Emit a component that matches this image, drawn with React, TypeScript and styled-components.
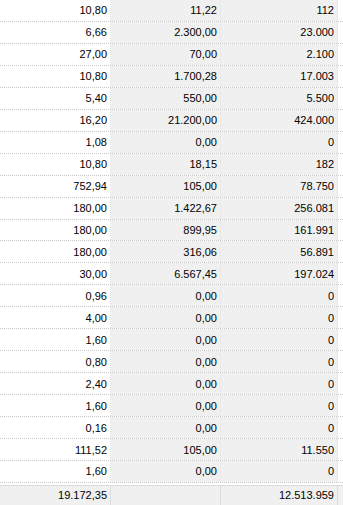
import React from "react";
import styled, { createGlobalStyle } from "styled-components";

const rows: [string, string, string][] = [
  ["10,80", "11,22", "112"],
  ["6,66", "2.300,00", "23.000"],
  ["27,00", "70,00", "2.100"],
  ["10,80", "1.700,28", "17.003"],
  ["5,40", "550,00", "5.500"],
  ["16,20", "21.200,00", "424.000"],
  ["1,08", "0,00", "0"],
  ["10,80", "18,15", "182"],
  ["752,94", "105,00", "78.750"],
  ["180,00", "1.422,67", "256.081"],
  ["180,00", "899,95", "161.991"],
  ["180,00", "316,06", "56.891"],
  ["30,00", "6.567,45", "197.024"],
  ["0,96", "0,00", "0"],
  ["4,00", "0,00", "0"],
  ["1,60", "0,00", "0"],
  ["0,80", "0,00", "0"],
  ["2,40", "0,00", "0"],
  ["1,60", "0,00", "0"],
  ["0,16", "0,00", "0"],
  ["111,52", "105,00", "11.550"],
  ["1,60", "0,00", "0"],
];

const GlobalStyle = createGlobalStyle`
  html, body {
    margin: 0;
    padding: 0;
    background: #fff;
    overflow: hidden;
  }
`;

const Grid = styled.div`
  width: 343px;
  height: 505px;
  display: flex;
  flex-direction: column;
  font-family: "Liberation Sans", Arial, sans-serif;
  font-size: 11px;
  color: #000;
`;

const Row = styled.div`
  display: grid;
  grid-template-columns: 111px 110px 117px;
  height: 22px;
  box-sizing: border-box;
  border-bottom: 1px dotted #c8c8c8;
`;

const Cell = styled.div<{ $shaded?: boolean }>`
  display: flex;
  align-items: center;
  justify-content: flex-end;
  padding-right: 3px;
  background: ${(p) => (p.$shaded ? "#f0f0f0" : "#fff")};
  border-right: 1px dotted #e2e2e2;
`;

const Footer = styled.div`
  margin-top: 2px;
  display: grid;
  grid-template-columns: 111px 110px 117px 5px;
  height: 19px;
  background: #f0f0f0;
  border-top: 1px solid #dadada;
`;

const FooterCell = styled.div`
  display: flex;
  align-items: center;
  justify-content: flex-end;
  padding-right: 3px;
  border-right: 1px solid #dcdcdc;
`;

export default function App() {
  return (
    <>
      <GlobalStyle />
      <Grid>
        {rows.map((r, i) => (
          <Row key={i}>
            <Cell>{r[0]}</Cell>
            <Cell $shaded>{r[1]}</Cell>
            <Cell $shaded>{r[2]}</Cell>
          </Row>
        ))}
        <Footer>
          <FooterCell>19.172,35</FooterCell>
          <FooterCell />
          <FooterCell>12.513.959</FooterCell>
        </Footer>
      </Grid>
    </>
  );
}
